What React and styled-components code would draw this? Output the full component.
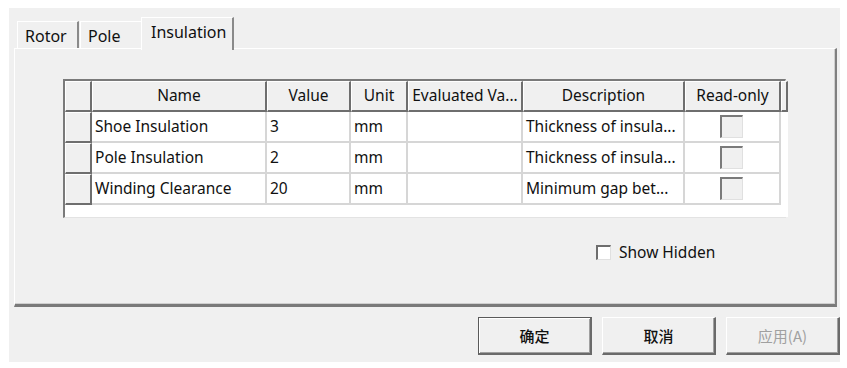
import React from "react";
import styled, { createGlobalStyle } from "styled-components";

const Global = createGlobalStyle`
  html, body { margin: 0; padding: 0; background: #ffffff; }
  body { font-family: "Noto Sans", "Noto Sans CJK SC", sans-serif; color: #000; }
  * { box-sizing: border-box; }
`;

const Window = styled.div`
  margin: 8px 0 0 9px;
  width: 831px;
  height: 354px;
  background: #f0f0f0;
  padding: 9px 0 0 5px;
  display: flex;
  flex-direction: column;
  font-size: 15px;
`;

const TabBar = styled.div`
  display: flex;
  align-items: flex-end;
  height: 31px;
  padding-left: 3px;
  position: relative;
  z-index: 1;
`;

const Tab = styled.div`
  width: ${(p) => p.$w}px;
  height: ${(p) => (p.$active ? "33px" : "27px")};
  margin-bottom: ${(p) => (p.$active ? "-2px" : "0")};
  margin-right: ${(p) => p.$gap || 0}px;
  padding-left: ${(p) => (p.$active ? "9px" : "7px")};
  display: flex;
  align-items: ${(p) => (p.$active ? "flex-start" : "center")};
  padding-top: ${(p) => (p.$active ? "3px" : "2px")};
  background: #f0f0f0;
  border-top: 1px solid #ffffff;
  border-left: 1px solid #ffffff;
  border-right: ${(p) => (p.$noRight ? "0" : "2px solid #8a8a8a")};
  color: #111;
  font-size: 16px;
`;

const Panel = styled.div`
  width: 823px;
  height: 259px;
  border-top: 1px solid #ffffff;
  border-left: 1px solid #ffffff;
  border-right: 2px solid #808080;
  border-bottom: 3px solid #7a7a7a;
  box-shadow: inset -1px -1px 0 #cfcfcf;
  padding: 30px 0 0 48px;
  display: flex;
  flex-direction: column;
`;

const Grid = styled.div`
  display: grid;
  grid-template-columns: 27px 175px 84px 57px 115px 162px 96px 7px;
  grid-template-rows: 31px 31px 31px 31px 12px;
  width: 723px;
  background: #ffffff;
  border-top: 2px solid #7a7a7a;
  border-left: 2px solid #7a7a7a;
  border-right: 1px solid #e3e3e3;
  border-bottom: 1px solid #e3e3e3;
`;

const HeadCell = styled.div`
  background: #f0f0f0;
  border-top: 1px solid #ffffff;
  border-left: 1px solid #ffffff;
  border-right: 2px solid #6e6e6e;
  border-bottom: 2px solid #6e6e6e;
  display: flex;
  align-items: center;
  justify-content: center;
  padding-bottom: 2px;
  white-space: nowrap;
  overflow: hidden;
  font-size: 15.5px;
  color: #111;
`;

const RowHead = styled.div`
  background: #f0f0f0;
  border-top: 1px solid #ffffff;
  border-left: 1px solid #ffffff;
  border-right: 2px solid #6e6e6e;
  border-bottom: 2px solid #6e6e6e;
`;

const Cell = styled.div`
  background: #ffffff;
  border-right: 2px solid #d6d6d6;
  border-bottom: 2px solid #d6d6d6;
  display: flex;
  align-items: center;
  justify-content: ${(p) => (p.$center ? "center" : "flex-start")};
  padding-left: ${(p) => (p.$center ? "0" : "3px")};
  padding-bottom: ${(p) => (p.$center ? "0" : "2px")};
  white-space: nowrap;
  overflow: hidden;
  font-size: 15.5px;
  color: #111;
`;

const Filler = styled.div`
  background: #ffffff;
`;

const GridBox = styled.div`
  width: 23px;
  height: 23px;
  background: #f0f0f0;
  border-top: 2px solid #7a7a7a;
  border-left: 2px solid #7a7a7a;
  border-right: 1px solid #e0e0e0;
  border-bottom: 1px solid #e0e0e0;
  margin-right: 2px;
`;

const HiddenRow = styled.div`
  display: flex;
  align-items: center;
  margin-top: 23px;
  margin-left: 533px;
  gap: 8px;
  font-size: 15.5px;
  color: #111;
`;

const SmallBox = styled.div`
  width: 15px;
  height: 15px;
  background: #ffffff;
  border-top: 2px solid #6e6e6e;
  border-left: 2px solid #6e6e6e;
  border-right: 1px solid #e0e0e0;
  border-bottom: 1px solid #e0e0e0;
`;

const Buttons = styled.div`
  display: flex;
  gap: 10px;
  margin-top: 10px;
  padding-left: 464px;
`;

const Button = styled.div`
  width: 114px;
  height: 38px;
  background: #f0f0f0;
  display: flex;
  align-items: center;
  justify-content: center;
  border-top: 1px solid ${(p) => (p.$default ? "#5a5a5a" : "#ffffff")};
  border-left: 1px solid ${(p) => (p.$default ? "#5a5a5a" : "#ffffff")};
  border-right: 2px solid #6a6a6a;
  border-bottom: 2px solid #6a6a6a;
  box-shadow: ${(p) => (p.$default ? "inset 1px 1px 0 #ffffff, inset -1px -1px 0 #a0a0a0" : "inset -1px -1px 0 #a0a0a0")};
  color: ${(p) => (p.$disabled ? "#a0a0a0" : "#111")};
  font-size: 15px;
  font-family: "Noto Sans CJK SC", "Noto Sans", sans-serif;
  font-weight: ${(p) => (p.$disabled ? 400 : 500)};
`;

const columns = ["Name", "Value", "Unit", "Evaluated Va...", "Description", "Read-only"];
const rows = [
  ["Shoe Insulation", "3", "mm", "", "Thickness of insula..."],
  ["Pole Insulation", "2", "mm", "", "Thickness of insula..."],
  ["Winding Clearance", "20", "mm", "", "Minimum gap bet..."],
];

export default function App() {
  return (
    <>
      <Global />
      <Window>
        <TabBar>
          <Tab $w={62} $gap={1}>Rotor</Tab>
          <Tab $w={61} $noRight>Pole</Tab>
          <Tab $w={93} $active>Insulation</Tab>
        </TabBar>
        <Panel>
          <Grid>
            <RowHead />
            {columns.map((c) => (
              <HeadCell key={c}>{c}</HeadCell>
            ))}
            <HeadCell />
            {rows.map((r) => (
              <React.Fragment key={r[0]}>
                <RowHead />
                {r.map((v, i) => (
                  <Cell key={i}>{v}</Cell>
                ))}
                <Cell $center>
                  <GridBox />
                </Cell>
                <Filler />
              </React.Fragment>
            ))}
            <Filler style={{ gridColumn: "1 / -1" }} />
          </Grid>
          <HiddenRow>
            <SmallBox />
            <span>Show Hidden</span>
          </HiddenRow>
        </Panel>
        <Buttons>
          <Button $default>确定</Button>
          <Button>取消</Button>
          <Button $disabled>应用(A)</Button>
        </Buttons>
      </Window>
    </>
  );
}
